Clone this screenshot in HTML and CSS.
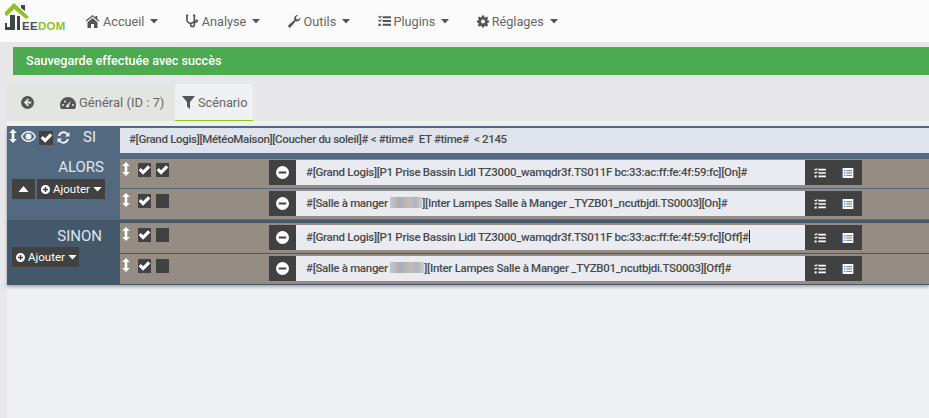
FILE: index.html
```html
<!DOCTYPE html>
<html lang="fr">
<head>
<meta charset="utf-8">
<title>Jeedom</title>
<link rel="stylesheet" href="styles.css">
</head>
<body>
<svg class="defs" width="0" height="0">
  <symbol id="i-arrows" viewBox="0 0 8 14"><path d="M4 0 7.800 4H5.300v6h2.500L4 14 .2 10h2.500V4H.2z"/></symbol>
  <symbol id="i-check" viewBox="0 0 14 12"><path d="M0 6.300 2.600 3.700 5.300 6.400 11.200 .4 14 3 5.300 11.600z"/></symbol>
  <symbol id="i-minus" viewBox="0 0 14 14"><path fill-rule="evenodd" d="M7 0a7 7 0 1 0 0 14A7 7 0 0 0 7 0zM3 5.800h8v2.400H3z"/></symbol>
  <symbol id="i-plus" viewBox="0 0 14 14"><path fill-rule="evenodd" d="M7 0a7 7 0 1 0 0 14A7 7 0 0 0 7 0zM5.900 3h2.200v2.900H11v2.200H8.100V11H5.900V8.100H3V5.900h2.900z"/></symbol>
  <symbol id="i-tasks" viewBox="0 0 14 12"><path d="M5 1h9v2H5zM5 5h9v2H5zM5 9h9v2H5zM0 1.500 1 .5l1 1 1.500-1.500.8.800L2 3.200zM0 5.500l1-1 1 1L3.500 4l.8.800L2 7.200zM.5 9h2.500v2.500H.5z"/></symbol>
  <symbol id="i-list" viewBox="0 0 14 12"><rect width="14" height="12" fill="#fff"/><rect x="13" width="1" height="12" fill="#c8404a"/><rect width="1" height="12" fill="#5a7fd0"/><path fill="#59606b" d="M2 2.500h2v1.500H2zM2 5.200h2v1.500H2zM2 8h2v1.500H2zM5 2.500h7v1.500H5zM5 5.200h7v1.500H5zM5 8h7v1.500H5z" opacity=".7"/></symbol>
  <symbol id="i-caret" viewBox="0 0 10 6"><path d="M0 0h10L5 5.500z"/></symbol>
</svg>

<nav class="navbar">
  <div class="logo">
    <svg class="logo-mark" width="30" height="32" viewBox="0 0 30 32">
      <path fill="#40434a" d="M16 2h4v6l-4-3z"/>
      <path fill="#40434a" d="M5 12h5v15H0v-7h2v4h3z"/>
      <path fill="#40434a" d="M12 13h3v14h-3z"/>
      <path fill="#8fc31f" d="M9 0 24 14l-3 2L9 6l-7 7-2-1V9z"/>
    </svg>
    <span class="logo-text"><span class="logo-ee">EE</span><span class="logo-dom">DOM</span></span>
  </div>
  <ul class="menu">
    <li class="menu-item">
      <svg class="nav-icon" width="15" height="13" viewBox="0 0 15 13"><path d="M7.500 1.500 1.500 6.500l-.8-1L7.500 0l3 2.500V1h1.800v3l2 1.500-.8 1zM2.500 7.200 7.500 3l5 4.200V13H9V9H6v4H2.500z"/></svg>
      Accueil <svg class="caret" width="8" height="5"><use href="#i-caret"/></svg>
    </li>
    <li class="menu-item">
      <svg class="nav-icon" width="13" height="14" viewBox="0 0 14 14"><path fill="none" stroke="currentColor" stroke-width="1.800" d="M2.500 1H1v4.500a4 4 0 0 0 8 0V1H7.500M5 9.500V11a2 2 0 0 0 4 0V9.500a2 2 0 0 1 2-1.500"/><circle cx="11.500" cy="7" r="1.500"/></svg>
      Analyse <svg class="caret" width="8" height="5"><use href="#i-caret"/></svg>
    </li>
    <li class="menu-item">
      <svg class="nav-icon" width="13" height="14" viewBox="0 0 14 14"><path d="M13.500 3.500a4 4 0 0 1-5.300 3.800L2.800 13.600a1.400 1.400 0 0 1-2.100-.1 1.400 1.400 0 0 1 0-2.100l6.200-5.500A4 4 0 0 1 11 .5L8.500 3l.5 2 2 .5 2.400-2.400z"/></svg>
      Outils <svg class="caret" width="8" height="5"><use href="#i-caret"/></svg>
    </li>
    <li class="menu-item">
      <svg class="nav-icon" width="13" height="12" viewBox="0 0 14 12"><use href="#i-tasks"/></svg>
      Plugins <svg class="caret" width="8" height="5"><use href="#i-caret"/></svg>
    </li>
    <li class="menu-item">
      <svg class="nav-icon" width="12" height="13" viewBox="0 0 13 13"><path fill-rule="evenodd" d="M5.300 0h2.400l.3 1.800 1 .4L10.500 1l1.600 1.600L11 4.100l.4 1 1.600.300v2.300l-1.600.3-.4 1 1 1.500-1.600 1.600-1.500-1-1 .4-.3 1.600H5.300L5 11.500l-1-.4-1.500 1L.9 10.500l1-1.500-.4-1L0 7.700V5.400l1.500-.3.4-1L.9 2.600 2.500 1 4 2.200l1-.4zM6.500 4.300a2.200 2.200 0 1 0 0 4.400 2.200 2.200 0 0 0 0-4.400z"/></svg>
      Réglages <svg class="caret" width="8" height="5"><use href="#i-caret"/></svg>
    </li>
  </ul>
</nav>

<div class="alert">Sauvegarde effectuée avec succès</div>

<main class="content">
  <div class="tabs">
    <div class="tab tab-back">
      <svg class="tab-icon" width="13" height="13" viewBox="0 0 14 14"><path fill-rule="evenodd" d="M7 0a7 7 0 1 1 0 14A7 7 0 0 1 7 0zM7.300 2.800 3 7l4.300 4.200 1.300-1.300-1.900-1.800H11V5.900H6.700l1.900-1.800z"/></svg>
    </div>
    <div class="tab tab-general">
      <svg class="tab-icon" width="16" height="12" viewBox="0 0 16 12"><path fill-rule="evenodd" d="M8 0a8 8 0 0 1 8 8c0 1.500-.4 2.800-1 4H1c-.6-1.200-1-2.500-1-4a8 8 0 0 1 8-8zM3 7a1 1 0 1 0 0 2 1 1 0 0 0 0-2zm2-3.500a1 1 0 1 0 0 2 1 1 0 0 0 0-2zm6 0-3.500 4a1.500 1.500 0 1 0 1.500 1zM13 7a1 1 0 1 0 0 2 1 1 0 0 0 0-2z"/></svg>
      Général (ID : 7)
    </div>
    <div class="tab tab-active">
      <svg class="tab-icon" width="13" height="13" viewBox="0 0 13 13"><path d="M0 0h13L8 6v7L5 10.500V6z"/></svg>
      Scénario
    </div>
  </div>

  <section class="scenario">
    <div class="si-block">
      <div class="si-head">
        <svg class="ico-arrows" width="8" height="14"><use href="#i-arrows"/></svg>
        <svg class="ico-eye" width="15" height="11" viewBox="0 0 15 11"><path fill-rule="evenodd" d="M7.500 0C11 0 13.800 2.300 15 5.500 13.800 8.700 11 11 7.500 11S1.200 8.700 0 5.500C1.200 2.300 4 0 7.500 0zm0 1.500C5 1.500 2.800 3.100 1.600 5.500 2.800 7.900 5 9.500 7.500 9.500s4.700-1.600 5.900-4C12.200 3.100 10 1.500 7.500 1.500zM7.500 2.500a3 3 0 1 1 0 6 3 3 0 0 1 0-6z"/></svg>
        <span class="box box-head"><svg width="13" height="10"><use href="#i-check"/></svg></span>
        <svg class="ico-sync" width="13" height="13" viewBox="0 0 13 13"><path d="M12.500 1v4.500H8l1.700-1.700A3.700 3.700 0 0 0 3.100 5H1.100a5.600 5.600 0 0 1 9.900-2.500zM.5 12V7.500H5L3.300 9.200A3.700 3.700 0 0 0 9.900 8h2a5.600 5.600 0 0 1-9.900 2.500z"/></svg>
        <span class="si-label">SI</span>
      </div>
      <div class="si-value">#[Grand Logis][MétéoMaison][Coucher du soleil]# &lt; #time#&nbsp; ET #time#&nbsp; &lt; 2145</div>
    </div>

    <div class="branch branch-alors">
      <div class="branch-head">
        <span class="branch-label">ALORS</span>
        <div class="branch-btns">
          <span class="btn btn-up"><svg width="11" height="6" viewBox="0 0 10 6"><path d="M5 0l5 6H0z"/></svg></span>
          <span class="btn btn-add"><svg width="9" height="9"><use href="#i-plus"/></svg>Ajouter <svg class="caret" width="9" height="5"><use href="#i-caret"/></svg></span>
        </div>
      </div>
      <div class="rows">
        <div class="row">
          <div class="row-ctl"><svg class="ico-arrows" width="8" height="14"><use href="#i-arrows"/></svg><span class="box"><svg width="13" height="10"><use href="#i-check"/></svg></span><span class="box"><svg width="13" height="10"><use href="#i-check"/></svg></span></div>
          <div class="row-cmd">
            <span class="cmd-btn cmd-minus"><svg width="13" height="13"><use href="#i-minus"/></svg></span>
            <span class="cmd-text">#[Grand Logis][P1 Prise Bassin Lidl TZ3000_wamqdr3f.TS011F bc:33:ac:ff:fe:4f:59:fc][On]#</span>
            <span class="cmd-actions"><svg width="12" height="10"><use href="#i-tasks"/></svg><svg width="12" height="10"><use href="#i-list"/></svg></span>
          </div>
        </div>
        <div class="row">
          <div class="row-ctl"><svg class="ico-arrows" width="8" height="14"><use href="#i-arrows"/></svg><span class="box"><svg width="13" height="10"><use href="#i-check"/></svg></span><span class="box"></span></div>
          <div class="row-cmd">
            <span class="cmd-btn cmd-minus"><svg width="13" height="13"><use href="#i-minus"/></svg></span>
            <span class="cmd-text">#[Salle à manger <span class="blur blur-a"></span>][Inter Lampes Salle à Manger _TYZB01_ncutbjdi.TS0003][On]#</span>
            <span class="cmd-actions"><svg width="12" height="10"><use href="#i-tasks"/></svg><svg width="12" height="10"><use href="#i-list"/></svg></span>
          </div>
        </div>
      </div>
    </div>

    <div class="branch branch-sinon">
      <div class="branch-head">
        <span class="branch-label label-sinon">SINON</span>
        <div class="branch-btns">
          <span class="btn btn-add btn-add-tight"><svg width="9" height="9"><use href="#i-plus"/></svg>Ajouter <svg class="caret" width="9" height="5"><use href="#i-caret"/></svg></span>
        </div>
      </div>
      <div class="rows">
        <div class="row">
          <div class="row-ctl"><svg class="ico-arrows" width="8" height="14"><use href="#i-arrows"/></svg><span class="box"><svg width="13" height="10"><use href="#i-check"/></svg></span><span class="box"></span></div>
          <div class="row-cmd">
            <span class="cmd-btn cmd-minus"><svg width="13" height="13"><use href="#i-minus"/></svg></span>
            <span class="cmd-text">#[Grand Logis][P1 Prise Bassin Lidl TZ3000_wamqdr3f.TS011F bc:33:ac:ff:fe:4f:59:fc][Off]#<span class="cursor"></span></span>
            <span class="cmd-actions"><svg width="12" height="10"><use href="#i-tasks"/></svg><svg width="12" height="10"><use href="#i-list"/></svg></span>
          </div>
        </div>
        <div class="row">
          <div class="row-ctl"><svg class="ico-arrows" width="8" height="14"><use href="#i-arrows"/></svg><span class="box"><svg width="13" height="10"><use href="#i-check"/></svg></span><span class="box"></span></div>
          <div class="row-cmd">
            <span class="cmd-btn cmd-minus"><svg width="13" height="13"><use href="#i-minus"/></svg></span>
            <span class="cmd-text">#[Salle à manger <span class="blur blur-b"></span>][Inter Lampes Salle à Manger _TYZB01_ncutbjdi.TS0003][Off]#</span>
            <span class="cmd-actions"><svg width="12" height="10"><use href="#i-tasks"/></svg><svg width="12" height="10"><use href="#i-list"/></svg></span>
          </div>
        </div>
      </div>
    </div>
  </section>
</main>
</body>
</html>
```

FILE: styles.css
```css
* { box-sizing: border-box; }
html, body { margin: 0; padding: 0; height: 100%; overflow: hidden; }
body {
  background: #e7e7e9;
  font-family: Roboto, "Liberation Sans", sans-serif;
  font-size: 13px;
  color: #555;
  display: flex;
  flex-direction: column;
}
.defs { position: absolute; }
svg { fill: currentColor; display: block; flex: none; }

.navbar {
  height: 42px;
  background: #fbfbfb;
  display: flex;
  align-items: center;
}
.logo { width: 85px; height: 42px; padding: 3px 0 0 5px; display: flex; position: relative; }
.logo-text { position: absolute; left: 22px; top: 20px; font: bold 11.500px "Liberation Sans", sans-serif; letter-spacing: .3px; }
.logo-ee { color: #4a4d52; }
.logo-dom { color: #8fc31f; }
.menu { list-style: none; display: flex; margin: 0; padding: 0; }
.menu-item {
  display: flex;
  align-items: center;
  gap: 3px;
  font-size: 12.700px;
  color: #666;
  padding-right: 27.300px;
}
.nav-icon { color: #555; }
.caret { margin-left: 3px; color: #555; }

.alert {
  margin: 5px 0 0 13px;
  height: 28px;
  background: #4caa50;
  color: #fff;
  font-size: 12.600px;
  font-weight: 500;
  line-height: 27px;
  padding-left: 13px;
}

.content { margin: 9px 0 0 7px; background: #eff0f2; flex: 1; min-height: 0; }
.tabs { display: flex; height: 37px; background: #e7e7e9; }
.tab {
  display: flex;
  align-items: center;
  gap: 3px;
  background: #e3e5e3;
  color: #666;
  font-size: 13px;
}
.tab-icon { color: #555; }
.tab-back { width: 47px; padding-left: 14px; }
.tab-general { width: 121px; padding-left: 6px; }
.tab-active {
  width: 78px;
  padding-left: 7px;
  background: #eff0f2;
  border-bottom: 1px solid #8fc31f;
  font-size: 12.700px;
}

.scenario {
  margin-top: 5px;
  box-shadow: 0 2px 3px rgba(0,0,0,.3);
  background: #52697f;
}
.si-block { display: flex; height: 33px; padding-top: 2px; background: #52697f; }
.si-head {
  width: 113px;
  display: flex;
  color: #eef1f5;
  align-items: flex-start;
  padding: 1px 0 0 2px;
}
.ico-arrows { color: #fff; }
.ico-eye { margin: 2px 0 0 4px; }
.ico-sync { margin: 2px 0 0 4px; }
.box {
  width: 13px;
  height: 14px;
  background: #414141;
  color: #fff;
  display: flex;
  align-items: center;
  justify-content: center;
}
.box-head { width: 14px; margin: 2px 0 0 3px; }
.si-label { margin-left: 13px; font-size: 15px; line-height: 16px; color: #e8edf3; }
.si-value, .cmd-text {
  font-size: 11.500px;
  font-weight: 500;
  letter-spacing: -.3px;
  color: #4a4a4a;
  white-space: nowrap;
  line-height: 25px;
}
.si-value {
  flex: 1;
  height: 25px;
  line-height: 23px;
  letter-spacing: -.32px;
  background: #dfe3ec;
  padding-left: 9px;
}

.branch { display: flex; }
.branch-alors { background: #52697f; height: 61px; }
.branch-sinon { background: #44586c; height: 65px; }
.branch-head { width: 113px; display: flex; flex-direction: column; }
.branch-label {
  align-self: flex-end;
  padding-right: 16px;
  font-size: 15px;
  line-height: 16px;
  color: #dfe6ee;
}
.branch-btns { display: flex; gap: 2px; margin: 4px 0 0 5px; }
.branch-sinon .branch-head { padding-top: 8px; }
.branch-sinon .branch-btns { margin-top: 3px; }
.branch-sinon .rows { padding-top: 3px; }
.label-sinon { padding-right: 18px; }
.btn {
  height: 20px;
  background: #414141;
  color: #fff;
  font-size: 11.500px;
  display: flex;
  align-items: center;
  justify-content: center;
  gap: 3px;
}
.btn .caret { color: #fff; margin-left: 0; }
.btn-up { width: 23px; }
.btn-add { padding: 0 3px 0 4px; }
.btn-add-tight { padding-right: 2px; }

.rows { flex: 1; display: flex; flex-direction: column; gap: 1px; }
.row { height: 30px; background: #958c83; display: flex; align-items: flex-start; }
.row-ctl { width: 149px; display: flex; padding: 4px 0 0 2px; }
.row-ctl .box { margin-top: 1px; margin-right: 5px; }
.row-ctl .ico-arrows { margin-right: 8px; }
.row-cmd { display: flex; height: 25px; margin-top: 2px; }
.branch-alors .row:first-child { height: 29px; }
.branch-alors .row:first-child .row-ctl { padding-top: 3px; }
.branch-alors .row:first-child .row-cmd { margin-top: 1px; }
.cmd-btn {
  width: 27px;
  background: #414141;
  color: #fff;
  display: flex;
  align-items: center;
  justify-content: center;
}
.cmd-text {
  width: 509px;
  background: #e9ebf0;
  padding-left: 10px;
  display: block;
}
.cmd-actions {
  width: 57px;
  background: #414141;
  color: #fff;
  display: flex;
  align-items: center;
  gap: 16px;
  padding-left: 9px;
}
.blur { display: inline-block; height: 11px; vertical-align: -1px; background: linear-gradient(90deg, #c6c6c8, #a9adb4 30%, #c2bcb8 60%, #b0b4bc 80%, #cfcfd2); }
.blur-a { width: 32px; }
.blur-b { width: 34px; }
.cursor { display: inline-block; width: 1px; height: 13px; background: #222; vertical-align: -2px; }
```
